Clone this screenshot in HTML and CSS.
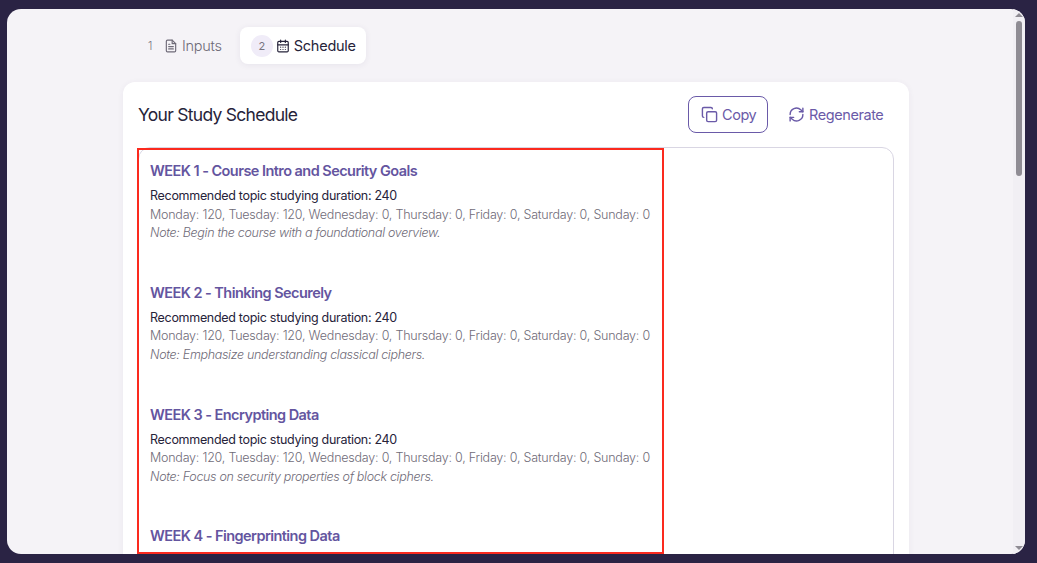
FILE: index.html
```html
<!DOCTYPE html>
<html lang="en">
<head>
<meta charset="utf-8">
<title>Your Study Schedule</title>
<link rel="stylesheet" href="styles.css">
</head>
<body>
<div class="window">
  <main class="page">
    <nav class="tabs">
      <div class="tab">
        <span class="num">1</span>
        <svg class="ticon" viewBox="0 0 24 24" fill="none" stroke="currentColor" stroke-width="2" stroke-linecap="round" stroke-linejoin="round"><path d="M14 2H6a2 2 0 0 0-2 2v16a2 2 0 0 0 2 2h12a2 2 0 0 0 2-2V8z"/><path d="M14 2v6h6"/><path d="M8 13h8M8 17h8M8 9h2"/></svg>
        <span>Inputs</span>
      </div>
      <div class="tab active">
        <span class="num">2</span>
        <svg class="ticon" viewBox="0 0 24 24" fill="none" stroke="currentColor" stroke-width="2" stroke-linecap="round" stroke-linejoin="round"><rect x="3" y="4" width="18" height="18" rx="2"/><path d="M16 2v4M8 2v4M3 10h18M8 14h.01M12 14h.01M16 14h.01M8 18h.01M12 18h.01M16 18h.01"/></svg>
        <span>Schedule</span>
      </div>
    </nav>
    <section class="card">
      <header class="card-head">
        <h1>Your Study Schedule</h1>
        <div class="actions">
          <button class="btn outlined">
            <svg class="bicon" viewBox="0 0 24 24" fill="none" stroke="currentColor" stroke-width="2" stroke-linecap="round" stroke-linejoin="round"><rect x="8" y="8" width="14" height="14" rx="2"/><path d="M4 16c-1.1 0-2-.9-2-2V4c0-1.1.9-2 2-2h10c1.1 0 2 .9 2 2"/></svg>
            Copy
          </button>
          <button class="btn plain">
            <svg class="bicon" viewBox="0 0 24 24" fill="none" stroke="currentColor" stroke-width="2" stroke-linecap="round" stroke-linejoin="round"><path d="M3 12a9 9 0 0 1 15-6.7L21 8"/><path d="M21 3v5h-5"/><path d="M21 12a9 9 0 0 1-15 6.7L3 16"/><path d="M8 16H3v5"/></svg>
            Regenerate
          </button>
        </div>
      </header>
      <div class="output">
        <article class="week">
          <h2>WEEK 1 - Course Intro and Security Goals</h2>
          <p class="rec">Recommended topic studying duration: 240</p>
          <p class="days">Monday: 120, Tuesday: 120, Wednesday: 0, Thursday: 0, Friday: 0, Saturday: 0, Sunday: 0</p>
          <p class="note">Note: Begin the course with a foundational overview.</p>
        </article>
        <article class="week">
          <h2>WEEK 2 - Thinking Securely</h2>
          <p class="rec">Recommended topic studying duration: 240</p>
          <p class="days">Monday: 120, Tuesday: 120, Wednesday: 0, Thursday: 0, Friday: 0, Saturday: 0, Sunday: 0</p>
          <p class="note">Note: Emphasize understanding classical ciphers.</p>
        </article>
        <article class="week">
          <h2>WEEK 3 - Encrypting Data</h2>
          <p class="rec">Recommended topic studying duration: 240</p>
          <p class="days">Monday: 120, Tuesday: 120, Wednesday: 0, Thursday: 0, Friday: 0, Saturday: 0, Sunday: 0</p>
          <p class="note">Note: Focus on security properties of block ciphers.</p>
        </article>
        <article class="week">
          <h2>WEEK 4 - Fingerprinting Data</h2>
        </article>
      </div>
    </section>
  </main>
  <div class="highlight"></div>
  <div class="scrollbar">
    <span class="arrow up"></span>
    <span class="thumb"></span>
    <span class="arrow down"></span>
  </div>
</div>
</body>
</html>
```
FILE: styles.css
```css
* { box-sizing: border-box; }
html, body { margin: 0; height: 100%; overflow: hidden; }
body {
  background: #2a2344;
  padding: 9px 12px 9px 7px;
  font-family: Inter, "Noto Sans", sans-serif;
}
.window {
  position: relative;
  height: 545px;
  background: #f5f3f7;
  border-radius: 14px;
  overflow: hidden;
}
.page {
  width: 786px;
  margin-left: 116px;
  padding-top: 18px;
}
.tabs { display: flex; height: 37px; margin-left: 5px; gap: 7px; }
.tab {
  display: flex;
  align-items: center;
  padding: 0 11px;
  border-radius: 8px;
  font-size: 14.5px;
  font-weight: 300;
  letter-spacing: -0.25px;
  color: #6f6b78;
}
.tab.active {
  padding-right: 10px;
  background: #fff;
  color: #26233a;
  font-weight: 400;
  box-shadow: 0 1px 6px rgba(60, 50, 100, .08);
}
.num {
  width: 22px;
  height: 22px;
  margin-right: 3px;
  border-radius: 50%;
  font-size: 11px;
  line-height: 22px;
  text-align: center;
  color: #77737f;
}
.active .num { background: #f0ecf8; }
.ticon { width: 14px; height: 14px; margin-right: 4px; }
.card {
  margin-top: 18px;
  padding: 14px 15px 0;
  background: #fff;
  border-radius: 12px;
  box-shadow: 0 1px 6px rgba(60, 50, 100, .06);
  height: 500px;
}
.card-head { display: flex; justify-content: space-between; align-items: center; height: 37px; }
h1 {
  margin: 0;
  font-size: 17.5px;
  font-weight: 400;
  letter-spacing: -0.72px;
  color: #26233a;
}
.actions { display: flex; gap: 8px; }
.btn {
  display: flex;
  align-items: center;
  gap: 4px;
  height: 37px;
  padding: 0 0 0 12px;
  background: none;
  border: 1px solid transparent;
  border-radius: 8px;
  font: inherit;
  font-size: 14.5px;
  font-weight: 400;
  letter-spacing: -0.42px;
  color: #6a5aa8;
}
.btn.outlined { width: 80px; border-color: #6a5aa8; }
.btn.plain { width: 118px; padding-left: 11px; }
.bicon { width: 17px; height: 17px; flex: none; }
.output {
  margin-top: 14px;
  padding: 13px 11px;
  height: 500px;
  border: 1px solid #d9d6e3;
  border-radius: 12px;
}
.week { height: 121.8px; }
h2 {
  margin: 0 0 6px;
  font-size: 14.5px;
  line-height: 20px;
  font-weight: 600;
  letter-spacing: -0.55px;
  color: #64559f;
}
p { margin: 0; font-size: 12.5px; line-height: 18.6px; letter-spacing: -0.3px; }
.rec { color: #26233a; }
.days { color: #6f6b78; font-weight: 300; letter-spacing: -0.22px; }
.note { color: #6f6b78; font-style: italic; font-weight: 300; letter-spacing: -0.32px; }
.highlight {
  position: absolute;
  left: 130px;
  top: 139px;
  width: 527px;
  height: 406px;
  border: 2px solid #fb2a1e;
}
.scrollbar {
  position: absolute;
  top: 0;
  right: 0;
  bottom: 0;
  width: 12px;
  display: flex;
  flex-direction: column;
  align-items: center;
  background: #f1eff4;
}
.thumb { width: 6px; height: 155px; margin-top: 4px; border-radius: 3px; background: #8f8c94; }
.arrow { width: 0; height: 0; border-left: 4px solid transparent; border-right: 4px solid transparent; }
.arrow.up { margin-top: 4px; border-bottom: 4px solid #8f8c94; }
.arrow.down { margin-top: auto; margin-bottom: 4px; border-top: 4px solid #8f8c94; }
```
